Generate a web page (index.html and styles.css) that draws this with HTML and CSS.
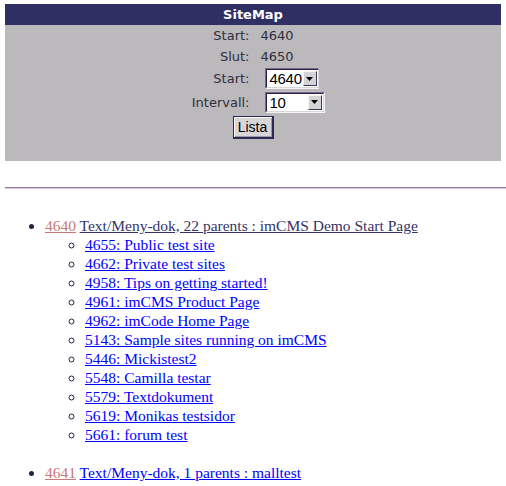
FILE: index.html
```html
<!DOCTYPE html>
<html>
<head>
<meta charset="utf-8">
<title>SiteMap</title>
<link rel="stylesheet" href="styles.css">
</head>
<body>
<div class="panel">
  <div class="panel-title">SiteMap</div>
  <div class="form-grid">
    <div class="lbl">Start:</div><div class="val">4640</div>
    <div class="lbl">Slut:</div><div class="val">4650</div>
    <div class="lbl">Start:</div>
    <div class="val"><span class="fsel w54"><span class="fsel-in"><span class="fsel-text">4640</span><span class="fsel-btn"><svg width="7" height="4" viewBox="0 0 7 4"><path d="M0 0H7L3.5 4Z" fill="#000"/></svg></span></span></span></div>
    <div class="lbl">Intervall:</div>
    <div class="val"><span class="fsel w60"><span class="fsel-in"><span class="fsel-text">10</span><span class="fsel-btn"><svg width="7" height="4" viewBox="0 0 7 4"><path d="M0 0H7L3.5 4Z" fill="#000"/></svg></span></span></span></div>
  </div>
  <div class="btn-row"><button class="btn" type="button">Lista</button></div>
</div>
<hr class="sep">
<ul class="tree">
  <li><a class="num" href="#">4640</a> <a class="doc" href="#">Text/Meny-dok, 22 parents : imCMS Demo Start Page</a>
    <ul class="sub">
      <li><a href="#">4655: Public test site</a></li>
      <li><a href="#">4662: Private test sites</a></li>
      <li><a href="#">4958: Tips on getting started!</a></li>
      <li><a href="#">4961: imCMS Product Page</a></li>
      <li><a href="#">4962: imCode Home Page</a></li>
      <li><a href="#">5143: Sample sites running on imCMS</a></li>
      <li><a href="#">5446: Mickistest2</a></li>
      <li><a href="#">5548: Camilla testar</a></li>
      <li><a href="#">5579: Textdokument</a></li>
      <li><a href="#">5619: Monikas testsidor</a></li>
      <li><a href="#">5661: forum test</a></li>
    </ul>
  </li>
  <li><a class="num" href="#">4641</a> <a href="#">Text/Meny-dok, 1 parents : malltest</a></li>
</ul>
</body>
</html>
```
FILE: styles.css
```css
html, body {
  margin: 0;
  padding: 0;
  background: #fff;
}
body {
  font-family: "Liberation Serif", "Times New Roman", serif;
  font-size: 15.5px;
  overflow: hidden;
}
.panel {
  margin: 4px 5px 0 5px;
  background: #bcb9bc;
  padding-bottom: 22px;
}
.panel-title {
  background: #302f64;
  color: #fff;
  font-family: "DejaVu Sans", Verdana, sans-serif;
  font-weight: bold;
  font-size: 13px;
  height: 21px;
  line-height: 21px;
  text-align: center;
}
.form-grid {
  display: grid;
  grid-template-columns: 1fr 1fr;
  grid-template-rows: 21px 21px 23px 24px;
  column-gap: 11px;
  padding-left: 4px;
  font-family: "DejaVu Sans", Verdana, sans-serif;
  font-size: 13px;
  color: #2e2e3c;
  align-items: center;
}
.lbl {
  text-align: right;
}
.val {
  display: flex;
  align-items: center;
}
.fsel {
  display: inline-flex;
  margin-left: 4px;
  height: 21px;
  box-sizing: border-box;
  border: 1px solid;
  border-color: #7a6a8a #f4f4f4 #f4f4f4 #7a6a8a;
  background: #fff;
}
.w54 { width: 54px; }
.w60 { width: 60px; }
.fsel-in {
  flex: 1;
  display: flex;
  align-items: stretch;
  border: 1px solid;
  border-color: #24204a #d8d8d8 #d8d8d8 #24204a;
  background: #fff;
}
.fsel-text {
  flex: 1;
  font-family: "Liberation Sans", Arial, sans-serif;
  font-size: 15px;
  color: #000;
  line-height: 17px;
  padding-left: 3px;
  letter-spacing: -0.3px;
}
.fsel-btn {
  width: 14px;
  margin: 1px;
  display: flex;
  align-items: center;
  justify-content: center;
  background: #d6d3d6;
  border: 1px solid;
  border-color: #f4f4f4 #3a3858 #3a3858 #f4f4f4;
  box-sizing: border-box;
}
.btn-row {
  display: flex;
  justify-content: center;
  margin-top: 2px;
}
.btn {
  width: 41px;
  height: 23px;
  padding: 0;
  background: #d8d5d8;
  border: 1px solid #2b2a55;
  border-bottom-width: 2px;
  border-right-width: 2px;
  box-shadow: inset 1px 1px #fbfbfb, inset -1px -1px #9a98a8;
  font-family: "Liberation Sans", Arial, sans-serif;
  font-size: 14px;
  color: #000;
}
.sep {
  margin: 26px 0 0 5px;
  height: 0;
  border: 0;
  border-top: 1px solid #9a7aa6;
  border-bottom: 1px solid #d4c4dc;
}
.tree {
  margin: 27px 0 0 5px;
  padding-left: 40px;
  line-height: 19px;
  list-style: disc;
}
.tree li::marker {
  color: #222244;
}
.sub {
  list-style: circle;
  padding-left: 40px;
  margin: 0 0 19px 0;
}
a {
  color: #0000ff;
  text-decoration: underline;
}
a.num {
  color: #cc7777;
}
a.doc {
  color: #333366;
}
```
